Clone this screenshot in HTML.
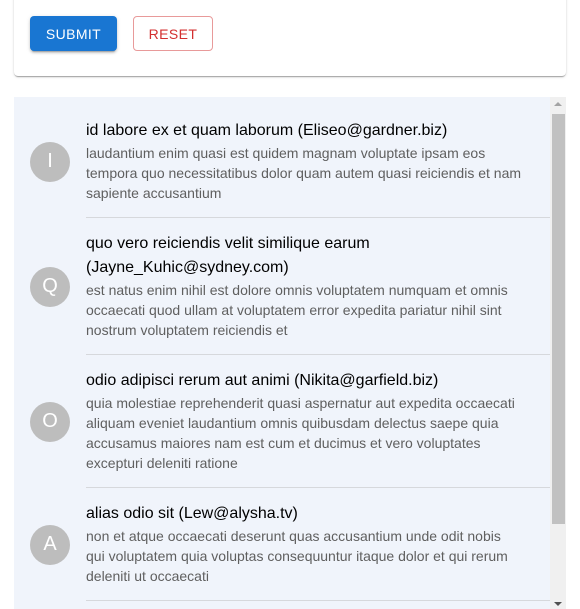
<!DOCTYPE html>
<html><head><style>
*{box-sizing:border-box;margin:0;padding:0}
body{width:580px;height:609px;overflow:hidden;background:#fff;font-family:"Liberation Sans",Arial,sans-serif;position:relative}
.card{position:absolute;left:14px;top:-10px;width:552px;height:86px;background:#fff;border-radius:4px;box-shadow:0 2px 1px -1px rgba(0,0,0,.2),0 1px 1px 0 rgba(0,0,0,.14),0 1px 3px 0 rgba(0,0,0,.12)}
.btn{position:absolute;top:16px;height:35px;border-radius:4px;font-size:14px;letter-spacing:.4px;display:flex;align-items:center;justify-content:center}
.sub{left:30px;width:87px;background:#1976d2;color:#fff;box-shadow:0 3px 1px -2px rgba(0,0,0,.2),0 2px 2px 0 rgba(0,0,0,.14),0 1px 5px 0 rgba(0,0,0,.12)}
.res{left:133px;width:80px;border:1px solid #e89a9a;color:#d32f2f}
.list{position:absolute;left:14px;top:97px;width:552px;height:512px;background:#f0f4fb;overflow:hidden}
.sb{position:absolute;right:0;top:0;width:16px;height:512px;background:#f0f0f0}
.thumb{position:absolute;left:2px;top:17px;width:13px;height:410px;background:#c1c1c1}
.au{position:absolute;left:4px;top:5px;width:0;height:0;border-left:4px solid transparent;border-right:4px solid transparent;border-bottom:4px solid #a3a3a3}
.ad{position:absolute;left:4px;bottom:3px;width:0;height:0;border-left:4px solid transparent;border-right:4px solid transparent;border-top:4px solid #505050}
.items{position:absolute;left:0;top:8px;width:536px}
.item{position:relative;padding:14px 0 15px 72px}
.item:after{content:"";position:absolute;left:72px;right:0;bottom:0;height:1px;background:#d6d8dc}
.av{position:absolute;left:16px;top:50%;margin-top:-20px;width:40px;height:40px;border-radius:50%;background:#bdbdbd;color:#fff;font-size:20px;display:flex;align-items:center;justify-content:center}
.t{font-size:16px;line-height:24px;color:#000;width:447px}
.b{font-size:14px;line-height:20px;color:#5f5f5f;width:442px}
.b4{width:434px}
</style></head><body>
<div class="card"></div>
<div class="btn sub">SUBMIT</div>
<div class="btn res">RESET</div>
<div class="list">
<div class="items">
<div class="item"><div class="av">I</div><div class="t">id labore ex et quam laborum (Eliseo@gardner.biz)</div><div class="b">laudantium enim quasi est quidem magnam voluptate ipsam eos tempora quo necessitatibus dolor quam autem quasi reiciendis et nam sapiente accusantium</div></div>
<div class="item"><div class="av">Q</div><div class="t">quo vero reiciendis velit similique earum (Jayne_Kuhic@sydney.com)</div><div class="b">est natus enim nihil est dolore omnis voluptatem numquam et omnis occaecati quod ullam at voluptatem error expedita pariatur nihil sint nostrum voluptatem reiciendis et</div></div>
<div class="item"><div class="av">O</div><div class="t">odio adipisci rerum aut animi (Nikita@garfield.biz)</div><div class="b">quia molestiae reprehenderit quasi aspernatur aut expedita occaecati aliquam eveniet laudantium omnis quibusdam delectus saepe quia accusamus maiores nam est cum et ducimus et vero voluptates excepturi deleniti ratione</div></div>
<div class="item"><div class="av">A</div><div class="t">alias odio sit (Lew@alysha.tv)</div><div class="b b4">non et atque occaecati deserunt quas accusantium unde odit nobis qui voluptatem quia voluptas consequuntur itaque dolor et qui rerum deleniti ut occaecati</div></div>
</div>
<div class="sb"><div class="au"></div><div class="thumb"></div><div class="ad"></div></div>
</div>
</body></html>
